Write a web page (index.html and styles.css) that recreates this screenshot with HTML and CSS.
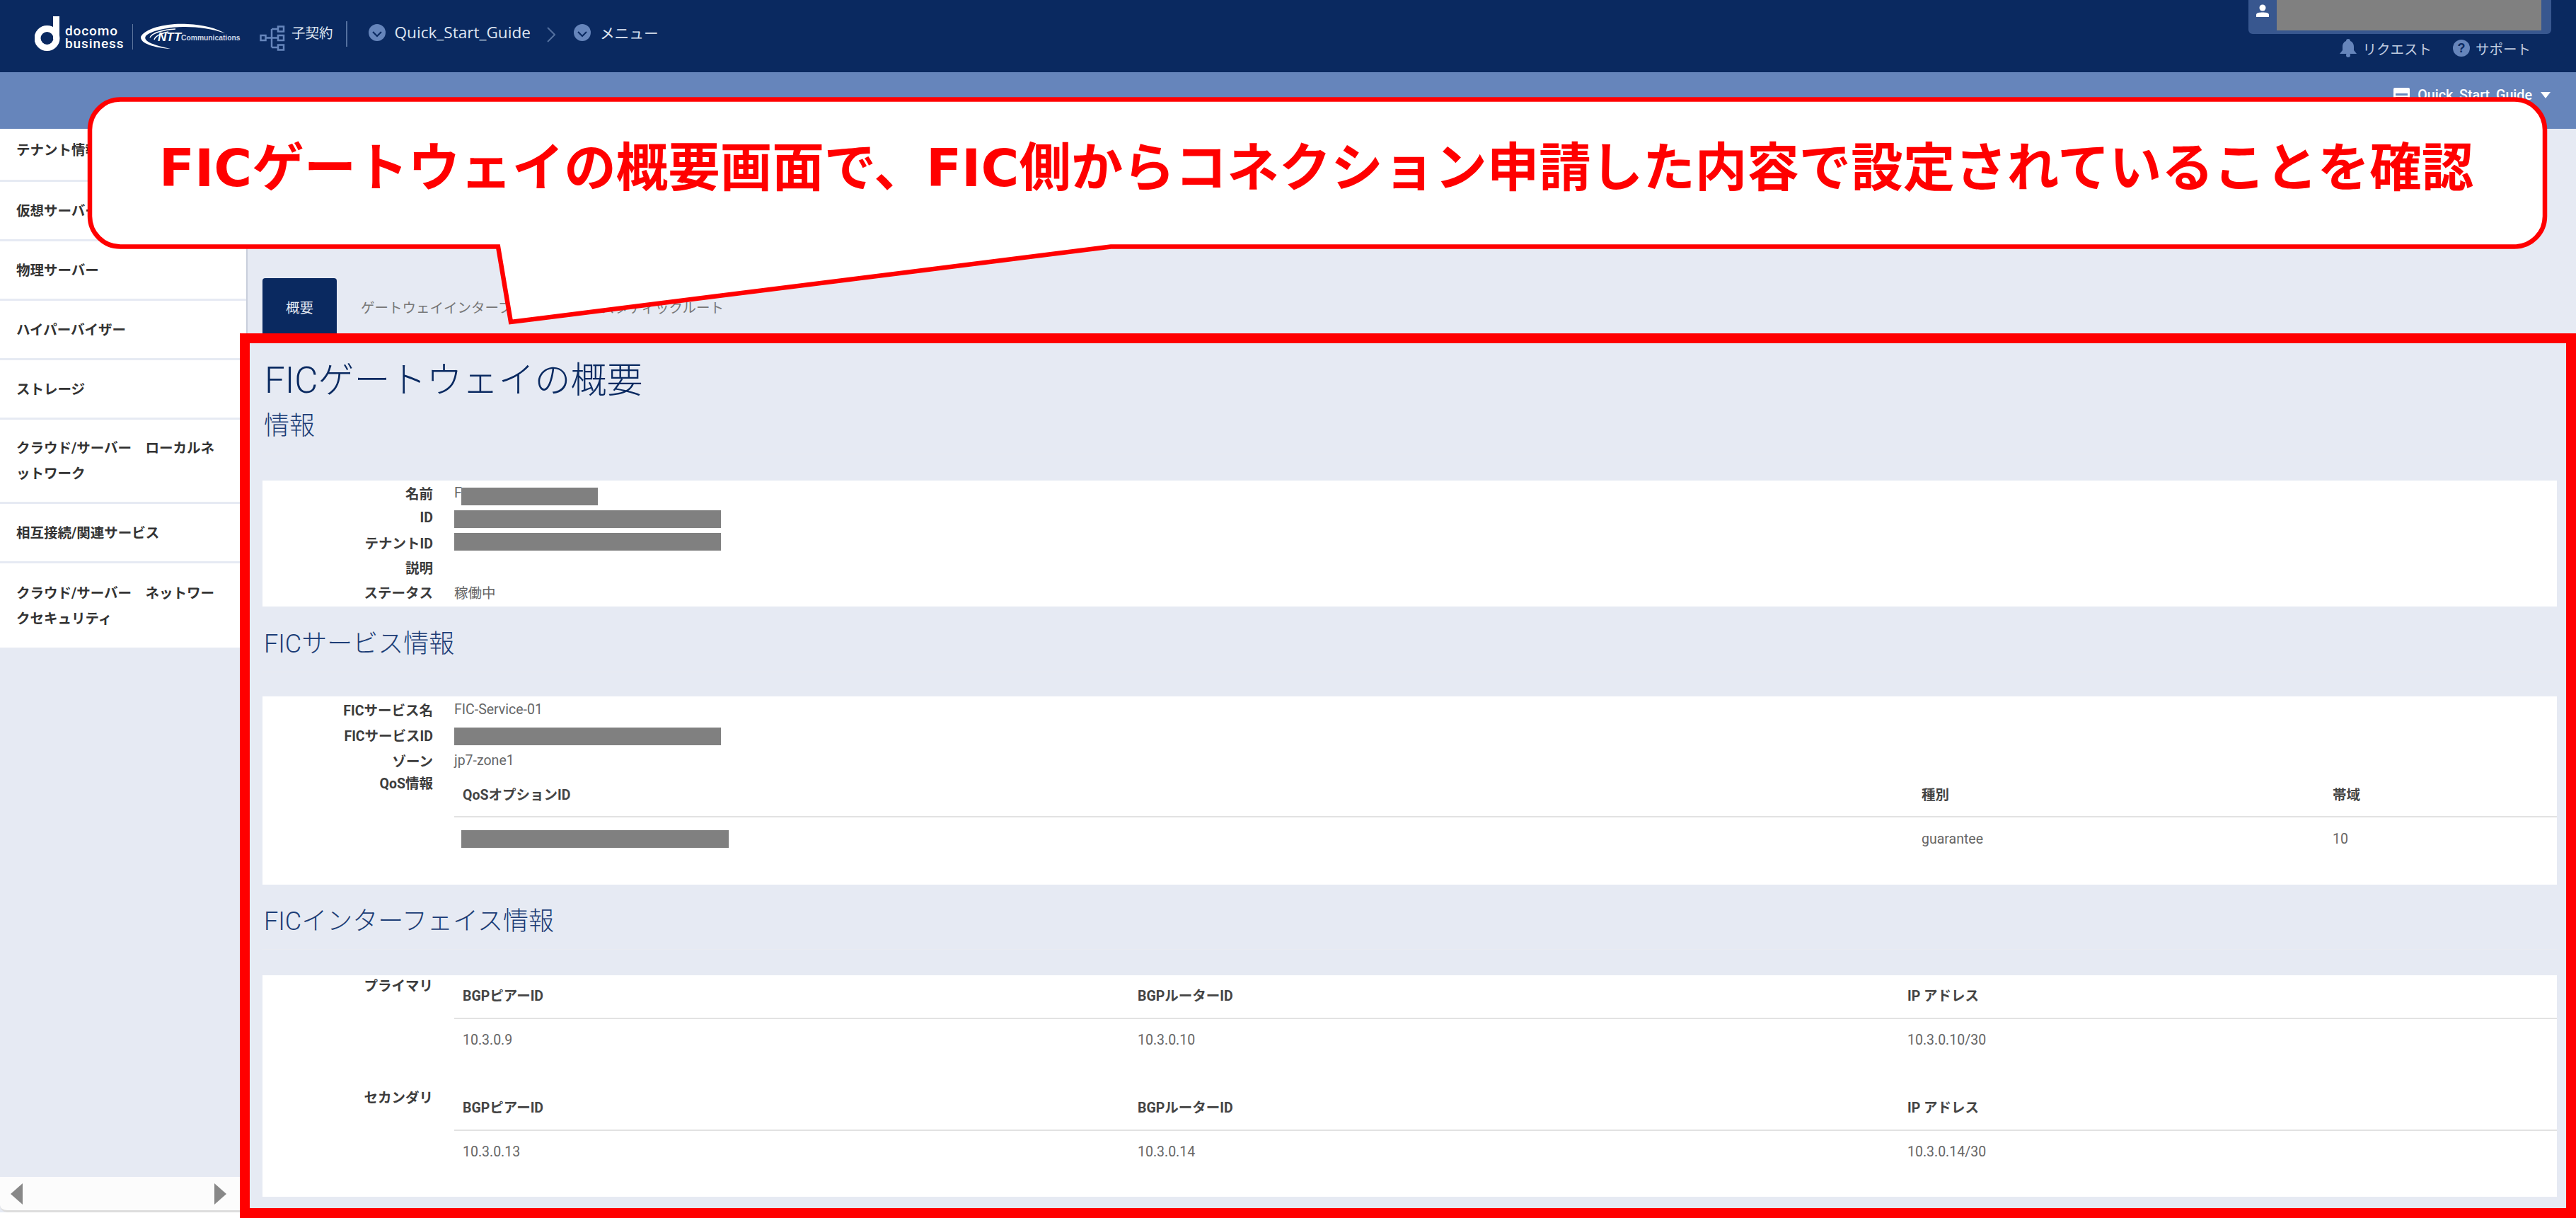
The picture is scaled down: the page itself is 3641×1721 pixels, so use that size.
FILE: index.html
```html
<!DOCTYPE html>
<html lang="ja">
<head>
<meta charset="utf-8">
<title>FICゲートウェイの概要</title>
<link rel="stylesheet" href="styles.css">
</head>
<body>
<div class="app">
  <header class="topbar">
    <div class="brand">
      <svg class="d-mark" viewBox="0 0 36 50" width="36" height="50"><circle cx="17.500" cy="31" r="13.500" fill="none" stroke="#fff" stroke-width="9"/><rect x="26" y="0" width="9" height="32" fill="#fff"/></svg>
      <div class="docomo">docomo<br>business</div>
      <span class="brand-sep"></span>
      <svg class="ntt" viewBox="0 0 146 40" width="146" height="40">
        <path fill="#fff" d="M1 20C7 7 42 0 67 2C90 3 108 8 120 15C103 9 82 6 64 6C42 6 16 11 8 19C4 26 16 31 43 37C18 35 0 29 1 20Z"/>
        <path fill="none" stroke="#fff" stroke-width="1.500" d="M14 21C17 14 34 10 50 9M20 24C22 18 30 15 40 13"/>
        <text x="25" y="26" class="ntt-big">NTT</text>
        <text x="58" y="25" class="ntt-small">Communications</text>
      </svg>
    </div>
    <svg class="tree" viewBox="0 0 36 36" width="36" height="36"><g fill="none" stroke="#6685bb" stroke-width="2.500"><rect x="1.500" y="14" width="7" height="7"/><rect x="26" y="1.500" width="8" height="7"/><rect x="26" y="14" width="8" height="7"/><rect x="26" y="27.500" width="8" height="7"/><path d="M8.500 17.500H26M17 5V31M17 5H26M17 31H26"/></g></svg>
    <span class="top-link contract">子契約</span>
    <span class="top-sep"></span>
    <svg class="circle-ico" viewBox="0 0 24 24" width="24" height="24"><circle cx="12" cy="12" r="12" fill="#6685bb"/><path d="M6 11l6 6 6-6" fill="none" stroke="#0a2960" stroke-width="2"/></svg>
    <span class="top-link guide">Quick_Start_Guide</span>
    <svg class="crumb" viewBox="0 0 12 22" width="12" height="22"><path d="M1 1l10 10L1 21" fill="none" stroke="#54709f" stroke-width="2"/></svg>
    <svg class="circle-ico" viewBox="0 0 24 24" width="24" height="24"><circle cx="12" cy="12" r="12" fill="#6685bb"/><path d="M6 11l6 6 6-6" fill="none" stroke="#0a2960" stroke-width="2"/></svg>
    <span class="top-link menu">メニュー</span>
    <div class="account">
      <div class="userbox">
        <span class="user-ico"><svg viewBox="0 0 18 18" width="18" height="18"><circle cx="9" cy="5" r="4.500" fill="#fff"/><path d="M0 18v-3c0-3 4-3.500 9-3.500s9 .5 9 3.500v3z" fill="#fff"/></svg></span>
        <span class="redact user-redact"></span>
      </div>
      <div class="help">
        <svg viewBox="0 0 24 26" width="24" height="26"><path fill="#6685bb" d="M12 0c2 0 3 1 3 3c3 1 5 4 5 8v5l4 5H0l4-5v-5c0-4 2-7 5-8c0-2 1-3 3-3z"/><circle cx="12" cy="23" r="3" fill="#6685bb"/></svg>
        <span class="help-text req">リクエスト</span>
        <svg viewBox="0 0 24 24" width="24" height="24"><circle cx="12" cy="12" r="12" fill="#6685bb"/><text x="12" y="18" class="q-mark">?</text></svg>
        <span class="help-text">サポート</span>
      </div>
    </div>
  </header>

  <div class="subbar">
    <svg viewBox="0 0 23 22" width="23" height="22"><rect width="23" height="22" rx="2" fill="#fff"/><path d="M3 8h17v3H3zM3 13h17v3H3z" fill="#6685bb"/></svg>
    <span class="sub-text">Quick_Start_Guide</span>
    <span class="caret"></span>
  </div>

  <div class="body">
    <aside class="sidebar">
      <nav class="nav">
        <a class="nav-item first">テナント情報</a>
        <a class="nav-item">仮想サーバー</a>
        <a class="nav-item">物理サーバー</a>
        <a class="nav-item">ハイパーバイザー</a>
        <a class="nav-item">ストレージ</a>
        <a class="nav-item tall">クラウド/サーバー　ローカルネットワーク</a>
        <a class="nav-item">相互接続/関連サービス</a>
        <a class="nav-item tall last">クラウド/サーバー　ネットワークセキュリティ</a>
      </nav>
      <div class="nav-rest"></div>
      <div class="hscroll"><span class="arrow left"></span><span class="arrow right"></span></div>
      <div class="nav-foot"></div>
    </aside>

    <main class="content">
      <div class="tabs">
        <a class="tab active">概要</a>
        <a class="tab">ゲートウェイインターフェイス</a>
        <a class="tab">スタティックルート</a>
      </div>

      <h1 class="title">FICゲートウェイの概要</h1>

      <h2 class="section s1">情報</h2>
      <section class="panel p1">
        <div class="row"><span class="label">名前</span><span class="value">F<span class="redact r-name"></span></span></div>
        <div class="row"><span class="label">ID</span><span class="value"><span class="redact r-id r-low"></span></span></div>
        <div class="row"><span class="label">テナントID</span><span class="value"><span class="redact r-id r-high"></span></span></div>
        <div class="row"><span class="label">説明</span><span class="value"></span></div>
        <div class="row"><span class="label">ステータス</span><span class="value">稼働中</span></div>
      </section>

      <h2 class="section s2">FICサービス情報</h2>
      <section class="panel p2">
        <div class="row wide"><span class="label">FICサービス名</span><span class="value">FIC-Service-01</span></div>
        <div class="row wide"><span class="label">FICサービスID</span><span class="value"><span class="redact r-id r-lower"></span></span></div>
        <div class="row wide"><span class="label">ゾーン</span><span class="value">jp7-zone1</span></div>
        <div class="row block">
          <span class="label">QoS情報</span>
          <div class="grid qos">
            <span class="th">QoSオプションID</span><span class="th">種別</span><span class="th">帯域</span>
            <span class="td"><span class="redact r-qos"></span></span><span class="td">guarantee</span><span class="td">10</span>
          </div>
        </div>
      </section>

      <h2 class="section s3">FICインターフェイス情報</h2>
      <section class="panel p3">
        <div class="row block">
          <span class="label">プライマリ</span>
          <div class="grid bgp">
            <span class="th">BGPピアーID</span><span class="th">BGPルーターID</span><span class="th">IP アドレス</span>
            <span class="td">10.3.0.9</span><span class="td">10.3.0.10</span><span class="td">10.3.0.10/30</span>
          </div>
        </div>
        <div class="row block second">
          <span class="label">セカンダリ</span>
          <div class="grid bgp">
            <span class="th">BGPピアーID</span><span class="th">BGPルーターID</span><span class="th">IP アドレス</span>
            <span class="td">10.3.0.13</span><span class="td">10.3.0.14</span><span class="td">10.3.0.14/30</span>
          </div>
        </div>
      </section>
    </main>
  </div>

  <div class="frame"></div>

  <div class="callout">
    <svg class="callout-shape" viewBox="0 0 3490 330" width="3490" height="330"><path d="M47 3.500H3431A43 43 0 0 1 3474 46.500V168.500A43 43 0 0 1 3431 211.500H1447L599 318L581 211.500H47A43 43 0 0 1 4 168.500V46.500A43 43 0 0 1 47 3.500Z" fill="#fff" stroke="#f00" stroke-width="6.500"/></svg>
    <p class="callout-text"><span class="lat">FIC</span>ゲートウェイの概要画面で、<span class="lat">FIC</span>側からコネクション申請した内容で設定されていることを確認</p>
  </div>
</div>
</body>
</html>
```
FILE: styles.css
```css
* { box-sizing: border-box; }
html, body { margin: 0; padding: 0; }
body {
  width: 3641px;
  height: 1721px;
  overflow: hidden;
  font-family: Roboto, "Noto Sans CJK JP", sans-serif;
  font-size: 19.5px;
  color: #444;
  background: #e6eaf3;
}
.app { position: relative; width: 3641px; height: 1721px; display: flex; flex-direction: column; }

/* top bar */
.topbar { height: 102px; flex: none; background: #0a2960; display: flex; align-items: flex-start; padding: 0 35px 0 49px; }
.brand { display: flex; align-items: flex-start; flex: none; width: 318px; }
.d-mark { margin-top: 23px; flex: none; }
.docomo { margin: 35px 0 0 7px; width: 95px; flex: none; color: #fff; font-size: 19px; font-weight: 500; line-height: 18px; letter-spacing: .9px; }
.brand-sep { width: 1px; height: 36px; margin: 34px 0 0 0; background: #5f779f; flex: none; }
.ntt { margin: 32px 0 0 10px; flex: none; }
.ntt-big { font: italic 700 17px "Liberation Sans", sans-serif; fill: #fff; }
.ntt-small { font: 700 10.300px "Liberation Sans", sans-serif; fill: #cfd7e6; }
.tree { margin-top: 36px; flex: none; }
.top-link { color: #dfe6f2; line-height: 28px; flex: none; }
.contract { margin: 34px 0 0 9px; }
.top-sep { width: 2px; height: 36px; margin: 30px 30px 0 18px; background: #54709f; flex: none; }
.circle-ico { margin-top: 34px; flex: none; }
.guide { margin: 32px 0 0 13px; font-family: "Open Sans", sans-serif; font-size: 22.600px; }
.crumb { margin: 38px 26px 0 23px; flex: none; }
.menu { margin: 34px 0 0 13px; font-size: 20.700px; }
.account { margin-left: auto; width: 428px; flex: none; }
.userbox { height: 48px; background: #38578f; border-radius: 0 0 6px 6px; display: flex; padding: 0 14px 5px 0; }
.user-ico { width: 40px; flex: none; display: flex; align-items: flex-start; justify-content: center; padding-top: 6px; }
.user-redact { flex: 1; }
.help { display: flex; align-items: center; justify-content: flex-end; height: 40px; padding-right: 29px; color: #c2cde0; }
.help-text { margin-left: 8px; }
.req { margin-right: 30px; }
.q-mark { font: 700 18px "Liberation Sans", sans-serif; fill: #0a2960; text-anchor: middle; }

/* sub bar */
.subbar { height: 80px; flex: none; background: #6685bb; display: flex; align-items: flex-start; justify-content: flex-end; padding: 22px 36px 0 0; }
.sub-text { margin: 0 12px 0 11px; color: #fff; line-height: 22px; font-weight: 500; font-size: 19.700px; }
.caret { width: 0; height: 0; margin-top: 6px; border: solid transparent; border-width: 9px 7.500px 0; border-top-color: #fff; }

/* body */
.body { flex: 1; display: flex; min-height: 0; }
.sidebar { width: 350px; flex: none; display: flex; flex-direction: column; border-right: 2px solid #c8cedb; }
.nav { flex: none; }
.nav-item { display: flex; align-items: center; height: 84px; padding: 2px 40px 0 23px; background: #fff; border-bottom: 3px solid #e6eaf3; color: #333; font-weight: 700; line-height: 36px; line-break: loose; }
.nav-item.first { height: 75px; padding-top: 0; padding-bottom: 10px; }
.nav-item.tall { height: 119px; }
.nav-item.last { border-bottom: 0; }
.nav-rest { flex: 1; }
.hscroll { height: 50px; flex: none; background: #fcfcfc; border-bottom: 3px solid #ddd; border-radius: 0 0 0 10px; display: flex; justify-content: space-between; align-items: center; padding: 0 28px 0 15px; }
.arrow { width: 0; height: 0; border: solid transparent; border-width: 15px 0; }
.arrow.left { border-right: 17px solid #888; }
.arrow.right { border-left: 17px solid #888; }
.nav-foot { height: 8px; flex: none; background: #fff; }

/* content */
.content { flex: 1; min-width: 0; padding: 211px 27px 0 21px; }
.tabs { display: flex; height: 84px; }
.tab { display: flex; align-items: center; padding: 0 34px 4px; color: #777; }
.tab.active { width: 105px; justify-content: center; padding: 0 0 4px; background: #0a2960; border-radius: 4px 4px 0 0; color: #e3e8f2; }
.title { margin: 31px 0 0 3px; height: 58px; font-size: 51px; line-height: 60px; font-weight: 300; color: #0a2a61; }
.section { margin: 0; height: 62px; padding: 0 0 17px 2px; border-bottom: 1px solid #e9ebf1; font-size: 36px; line-height: 44px; font-weight: 300; color: #1c3d76; }
.section.s1 { margin-top: 14px; }
.section.s2 { margin-top: 31px; }
.section.s3 { margin-top: 30px; }

.panel { background: #fff; }
.p1 { margin-top: 37px; height: 178px; }
.p2 { margin-top: 34px; height: 266px; }
.p3 { margin-top: 36px; height: 313px; }

.row { display: grid; grid-template-columns: 241px 1fr; column-gap: 30px; height: 35px; align-items: center; }
.row.wide { height: 36px; }
.row.block { height: auto; align-items: start; }
.row.block .label { line-height: 32px; }
.row.second { margin-top: 38px; }
.label { text-align: right; font-weight: 700; color: #3c3c3c; white-space: nowrap; }
.value { display: flex; align-items: center; color: #666; white-space: nowrap; }

.redact { display: block; background: #808080; }
.user-redact { height: 43px; }
.r-name { width: 193px; height: 25px; margin: 10px 0 0 -1px; }
.r-id { width: 377px; height: 25px; }
.r-low { margin-top: 4px; }
.r-lower { margin-top: 5px; }
.r-high { margin-bottom: 3px; }
.r-qos { width: 378px; height: 25px; margin-left: -2px; }

.grid { display: grid; }
.qos { grid-template-columns: 2062px 581px 329px; }
.bgp { grid-template-columns: 954px 1088px 930px; }
.th { display: flex; align-items: center; height: 63px; padding: 0 0 3px 12px; border-bottom: 2px solid #e2e2e2; font-weight: 700; color: #444; }
.td { display: flex; align-items: center; height: 60px; padding-left: 12px; color: #666; }
.bgp .th { height: 62px; padding-bottom: 6px; }
.bgp .td { height: 58px; }

/* annotation layers */
.frame { position: absolute; left: 339px; top: 471px; right: 0; bottom: 0; border: 14px solid #f00; }
.callout { position: absolute; left: 123px; top: 137px; width: 3478px; height: 214px; display: flex; align-items: center; justify-content: center; padding: 0 3px 20px 0; }
.callout-shape { position: absolute; left: 0; top: 0; }
.callout-text { position: relative; margin: 0; white-space: nowrap; font-family: "Noto Sans CJK JP", sans-serif; font-weight: 700; font-size: 73.500px; line-height: 90px; color: #f00; }
.lat { font-family: "DejaVu Sans", sans-serif; }
```
